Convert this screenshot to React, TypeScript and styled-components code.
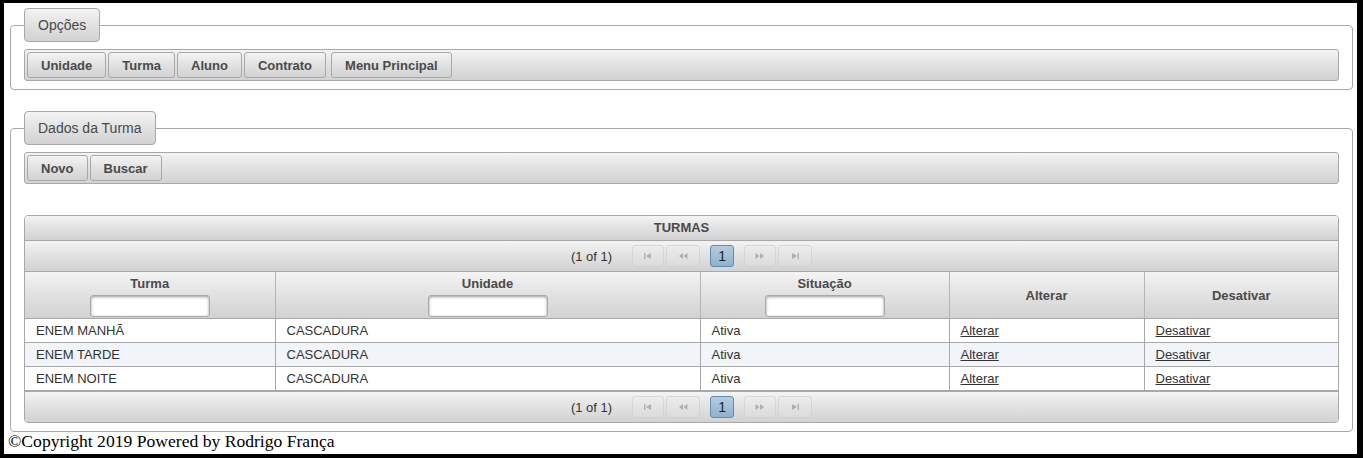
import React from "react";
import styled, { createGlobalStyle } from "styled-components";

const Global = createGlobalStyle`
  html { background: #000; }
  body {
    margin: 0;
    background: #fff;
    box-sizing: border-box;
    height: 458px;
    border-style: solid;
    border-color: #000;
    border-width: 3px 6px 4px 4px;
    padding: 5px 2px 0 4px;
    font-family: "Liberation Serif", "Times New Roman", serif;
    font-size: 16px;
    color: #000;
  }
`;

const grad = "linear-gradient(to bottom, #f4f4f4 0%, #e3e3e3 45%, #d2d2d2 100%)";
const UI = `"Liberation Sans", Arial, sans-serif`;

const Fieldset = styled.fieldset<{ $gap?: number }>`
  margin: ${(p) => p.$gap ?? 0}px 2px 0;
  padding: 7px 13px 8px;
  border: 1px solid #a8a8a8;
  border-radius: 4px;
  font-family: ${UI};
  font-size: 13px;
`;

const Legend = styled.legend`
  padding: 9px 13px 9px 13px;
  margin-left: 0;
  border: 1px solid #a8a8a8;
  border-radius: 4px;
  background: ${grad};
  color: #4a4a4a;
  font-size: 14px;
  line-height: 14px;
`;

const Toolbar = styled.div`
  display: flex;
  align-items: center;
  gap: 2px;
  height: 30px;
  padding: 0 2px;
  border: 1px solid #a8a8a8;
  border-radius: 3px;
  background: ${grad};
`;

const Button = styled.button<{ $sep?: boolean }>`
  height: 26px;
  padding: 0 13px;
  margin-left: ${(p) => (p.$sep ? 3 : 0)}px;
  border: 1px solid #a8a8a8;
  border-radius: 3px;
  background: ${grad};
  font-family: ${UI};
  font-size: 13px;
  font-weight: bold;
  color: #4a4a4a;
  cursor: pointer;
`;

const DataTable = styled.div`
  margin-top: 31px;
  border: 1px solid #a8a8a8;
  border-radius: 4px;
  overflow: hidden;
  font-family: ${UI};
  font-size: 13px;
  color: #333;
`;

const Caption = styled.div`
  height: 24px;
  line-height: 24px;
  text-align: center;
  font-weight: bold;
  color: #4a4a4a;
  background: ${grad};
  border-bottom: 1px solid #a8a8a8;
`;

const Pager = styled.div<{ $bottom?: boolean }>`
  display: flex;
  align-items: center;
  justify-content: center;
  height: 30px;
  padding-left: 20px;
  background: ${grad};
  ${(p) => (p.$bottom ? "border-top: 1px solid #a8a8a8;" : "border-bottom: 1px solid #a8a8a8;")}
`;

const PageInfo = styled.span`
  color: #333;
  margin-right: 20px;
`;

const NavButton = styled.span<{ $w: number; $ml?: number }>`
  display: inline-flex;
  align-items: center;
  justify-content: center;
  box-sizing: border-box;
  width: ${(p) => p.$w}px;
  height: 22px;
  margin-left: ${(p) => p.$ml ?? 0}px;
  border: 1px solid #cfcfcf;
  border-radius: 3px;
  background: linear-gradient(to bottom, #ececec, #dedede);
  opacity: 0.7;
`;

const PageNum = styled.span`
  display: inline-flex;
  align-items: center;
  justify-content: center;
  box-sizing: border-box;
  width: 24px;
  height: 22px;
  margin-left: 10px;
  margin-right: 10px;
  border: 1px solid #5f8bb0;
  border-radius: 3px;
  background: linear-gradient(to bottom, #b3cde0, #8fb2cc);
  color: #222;
  font-size: 14px;
`;

const Grid = styled.table`
  width: 100%;
  border-collapse: collapse;
  table-layout: fixed;
`;

const Th = styled.th`
  height: 46px;
  padding: 0;
  vertical-align: middle;
  text-align: center;
  font-weight: bold;
  color: #4a4a4a;
  background: ${grad};
  border-right: 1px solid #b5b5b5;
  border-bottom: 1px solid #a8a8a8;
  &:last-child { border-right: none; }
`;

const HeadLabel = styled.div`
  line-height: 15px;
  margin-top: 2px;
`;

const FilterInput = styled.input`
  display: block;
  box-sizing: border-box;
  width: 120px;
  height: 22px;
  margin: 4px auto 0;
  border: 1px solid #a8a8a8;
  border-radius: 3px;
  background: #fff;
  box-shadow: inset 0 1px 3px #999;
`;

const Tr = styled.tr<{ $alt?: boolean }>`
  background: ${(p) => (p.$alt ? "#f1f4f8" : "#fff")};
`;

const Td = styled.td`
  height: 23px;
  padding: 0 11px;
  border-right: 1px solid #a8a8a8;
  border-bottom: 1px solid #a8a8a8;
  color: #333;
  &:last-child { border-right: none; }
`;

const Link = styled.a`
  color: #333;
  text-decoration: underline;
  cursor: pointer;
`;

const Footer = styled.div`
  margin-top: 0;
  font-size: 17.6px;
  line-height: 18px;
`;

const Icon = ({ kind }: { kind: "first" | "prev" | "next" | "last" }) => {
  const c = "#9a9a9a";
  return (
    <svg width="10" height="6" viewBox="0 0 10 6">
      {kind === "first" && (
        <>
          <rect x="1" y="0" width="1.4" height="6" fill={c} />
          <path d="M8 0 L3 3 L8 6 Z" fill={c} />
        </>
      )}
      {kind === "prev" && (
        <>
          <path d="M5 0 L1 3 L5 6 Z" fill={c} />
          <path d="M9.5 0 L5.5 3 L9.5 6 Z" fill={c} />
        </>
      )}
      {kind === "next" && (
        <>
          <path d="M0.5 0 L4.5 3 L0.5 6 Z" fill={c} />
          <path d="M5 0 L9 3 L5 6 Z" fill={c} />
        </>
      )}
      {kind === "last" && (
        <>
          <path d="M2 0 L7 3 L2 6 Z" fill={c} />
          <rect x="7.6" y="0" width="1.4" height="6" fill={c} />
        </>
      )}
    </svg>
  );
};

const Paginator = ({ bottom }: { bottom?: boolean }) => (
  <Pager $bottom={bottom}>
    <PageInfo>(1 of 1)</PageInfo>
    <NavButton $w={32}><Icon kind="first" /></NavButton>
    <NavButton $w={34} $ml={2}><Icon kind="prev" /></NavButton>
    <PageNum>1</PageNum>
    <NavButton $w={32}><Icon kind="next" /></NavButton>
    <NavButton $w={34} $ml={2}><Icon kind="last" /></NavButton>
  </Pager>
);

const rows = [
  { turma: "ENEM MANHÃ", unidade: "CASCADURA", situacao: "Ativa" },
  { turma: "ENEM TARDE", unidade: "CASCADURA", situacao: "Ativa" },
  { turma: "ENEM NOITE", unidade: "CASCADURA", situacao: "Ativa" },
];

export default function App() {
  return (
    <>
      <Global />
      <Fieldset>
        <Legend>Opções</Legend>
        <Toolbar>
          <Button>Unidade</Button>
          <Button>Turma</Button>
          <Button>Aluno</Button>
          <Button>Contrato</Button>
          <Button $sep>Menu Principal</Button>
        </Toolbar>
      </Fieldset>
      <Fieldset $gap={21}>
        <Legend>Dados da Turma</Legend>
        <Toolbar>
          <Button>Novo</Button>
          <Button>Buscar</Button>
        </Toolbar>
        <DataTable>
          <Caption>TURMAS</Caption>
          <Paginator />
          <Grid>
            <colgroup>
              <col style={{ width: 250 }} />
              <col style={{ width: 425 }} />
              <col style={{ width: 249 }} />
              <col style={{ width: 195 }} />
              <col />
            </colgroup>
            <thead>
              <tr>
                <Th>
                  <HeadLabel>Turma</HeadLabel>
                  <FilterInput />
                </Th>
                <Th>
                  <HeadLabel>Unidade</HeadLabel>
                  <FilterInput />
                </Th>
                <Th>
                  <HeadLabel>Situação</HeadLabel>
                  <FilterInput />
                </Th>
                <Th>Alterar</Th>
                <Th>Desativar</Th>
              </tr>
            </thead>
            <tbody>
              {rows.map((r, i) => (
                <Tr key={r.turma} $alt={i === 1}>
                  <Td>{r.turma}</Td>
                  <Td>{r.unidade}</Td>
                  <Td>{r.situacao}</Td>
                  <Td><Link>Alterar</Link></Td>
                  <Td><Link>Desativar</Link></Td>
                </Tr>
              ))}
            </tbody>
          </Grid>
          <Paginator bottom />
        </DataTable>
      </Fieldset>
      <Footer>©Copyright 2019 Powered by Rodrigo França</Footer>
    </>
  );
}
